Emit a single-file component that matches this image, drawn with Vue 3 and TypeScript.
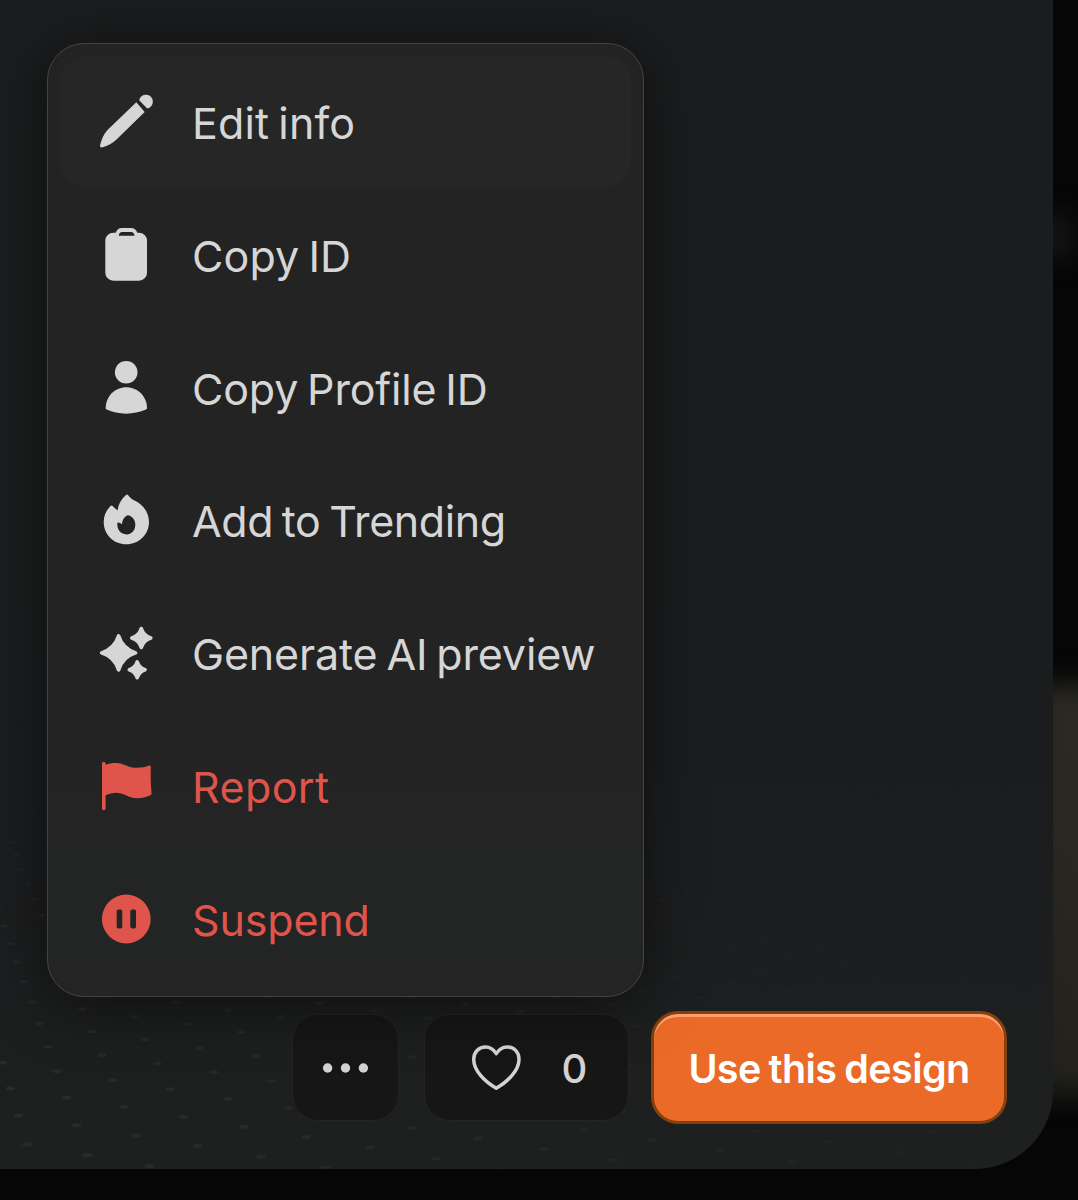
<script setup lang="ts">
interface MenuItem {
  label: string
  icon: string
  tracking: number
  danger?: boolean
  active?: boolean
}

const items: MenuItem[] = [
  { label: 'Edit info', icon: 'pencil', tracking: 0.12, active: true },
  { label: 'Copy ID', icon: 'clipboard', tracking: 0.1 },
  { label: 'Copy Profile ID', icon: 'person', tracking: -0.17 },
  { label: 'Add to Trending', icon: 'flame', tracking: -0.4 },
  { label: 'Generate AI preview', icon: 'sparkles', tracking: -0.15 },
  { label: 'Report', icon: 'flag', tracking: 0.4, danger: true },
  { label: 'Suspend', icon: 'pause', tracking: -0.15, danger: true },
]

// Four-pointed star around (cx, cy); the round stroke softens its tips.
function star(cx: number, cy: number, r: number): string {
  const a = r * 0.17
  const b = r * 0.46
  return (
    `M${cx} ${cy - r}C${cx + a} ${cy - b} ${cx + b} ${cy - a} ${cx + r} ${cy}` +
    `C${cx + b} ${cy + a} ${cx + a} ${cy + b} ${cx} ${cy + r}` +
    `C${cx - a} ${cy + b} ${cx - b} ${cy + a} ${cx - r} ${cy}` +
    `C${cx - b} ${cy - a} ${cx - a} ${cy - b} ${cx} ${cy - r}Z`
  )
}

interface Dot { x: number; y: number; s: number; o: number }

// Floor of dots seen in perspective.
const dots: Dot[] = []
for (let i = -26; i <= 9; i++) {
  for (let j = -3; j <= 30; j++) {
    const w = 1 - 0.0296 * i - 0.0115 * j
    if (w < 0.5) continue
    const x = (39.7 + 6.98 * i + 51.1 * j) / w
    const y = (1023.7 - 7.9 * i - 4.07 * j) / w
    if (x < -10 || x > 1050 || y < 720 || y > 1172) continue
    const o = Math.min(1, (y - 720) / 380) * Math.max(0.1, 1 - x / 1150)
    dots.push({ x, y, s: 0.88 / w, o })
  }
}
</script>

<template>
  <div class="stage">
    <div class="glow glow-small"></div>
    <div class="glow glow-large"></div>
    <main class="dialog">
      <svg class="floor" width="1053" height="1169" viewBox="0 0 1053 1169" aria-hidden="true">
        <ellipse
          v-for="(d, n) in dots"
          :key="n"
          :cx="d.x"
          :cy="d.y"
          :rx="4.8 * d.s"
          :ry="2.1 * d.s"
          :opacity="d.o"
          fill="#2a2c2b"
        />
      </svg>

      <footer class="actions">
        <button class="ghost more" aria-label="More">
          <svg width="56" height="20" viewBox="0 0 56 20" fill="#d3d3d3">
            <circle cx="9.6" cy="10" r="4.7" /><circle cx="27.5" cy="10" r="4.7" /><circle cx="45.4" cy="10" r="4.7" />
          </svg>
        </button>
        <button class="ghost like">
          <svg width="56" height="56" viewBox="0 0 56 56" fill="none" stroke="#d3d3d3" stroke-width="3.5" stroke-linejoin="round">
            <path d="M28.3 13.7C25.5 9.2 21.5 7 17.5 7C10.8 7 5.7 12 5.7 19.2C5.7 30.5 16.5 41.5 28.3 48.3C40 41.5 51 30.5 51 19.2C51 12 46 7 39.2 7C35 7 31 9.2 28.3 13.7Z" />
          </svg>
          <span class="count">0</span>
        </button>
        <button class="primary"><span>Use this design</span></button>
      </footer>

      <nav class="menu">
        <a
          v-for="item in items"
          :key="item.label"
          class="item"
          :class="{ danger: item.danger, active: item.active }"
        >
          <svg class="icon" width="56" height="56" viewBox="0 0 56 56" fill="currentColor">
            <template v-if="item.icon === 'pencil'">
              <path d="M41.2 7.2A6.9 6.9 0 1 1 49.2 15.4Z" />
              <path d="M38.3 9.3L46.7 18.9L18.5 46.5C14.5 50.5 9 53.5 3.8 54.4Q2 54.6 2 52.8C3 47.5 5.5 41.5 9.5 37Z" />
            </template>
            <path
              v-else-if="item.icon === 'clipboard'"
              fill-rule="evenodd"
              d="M15.3 6.7H17.7C18.8 3.8 20.8 2 23.8 2H33.2C36.2 2 38.2 3.8 39.3 6.7H41A8 8 0 0 1 49 14.7V46.7A8 8 0 0 1 41 54.7H15.3A8 8 0 0 1 7.3 46.7V14.7A8 8 0 0 1 15.3 6.7ZM20.8 9.7H36.6C36.2 7.4 35.2 5.9 33 5.9H24.2C22 5.9 21 7.4 20.8 9.7Z"
            />
            <template v-else-if="item.icon === 'person'">
              <circle cx="28.2" cy="13.2" r="11.3" />
              <path d="M7.7 49C7.7 37.5 16.8 28.2 28.3 28.2S49 37.5 49 49Q49 50 48 50.5C36 56 20 56 8.7 50.5Q7.7 50 7.7 49Z" />
            </template>
            <path
              v-else-if="item.icon === 'flame'"
              fill-rule="evenodd"
              d="M30 4C31.5 6 33.5 8.2 36.5 9.6C45 13.5 51 21.5 51 31C51 43.5 41 53.3 28.3 53.3C15.5 53.3 5.7 43.5 5.7 31C5.7 24.5 8.5 19 12.5 15Q13.7 14 14.8 15.2L19.6 19.6C20.2 13.5 23 8.5 28 4Q29.1 3.1 30 4ZM31 24.6C35 26 37.3 29.5 37.3 33.8C37.3 39.5 33.5 43.4 28.5 43.4C23 43.4 19 39 19.3 32.4Q19.5 31 20.8 31.6L24 33C24.3 29 26 26.5 28.5 24.8Q29.8 24 31 24.6Z"
            />
            <g v-else-if="item.icon === 'sparkles'" stroke="currentColor" stroke-width="3.6" stroke-linejoin="round">
              <path :d="star(20.6, 28.9, 17)" />
              <path :d="star(43.3, 14, 9.5)" />
              <path :d="star(39.2, 45.8, 7.9)" />
            </g>
            <path
              v-else-if="item.icon === 'flag'"
              d="M4 6.6A1.75 1.75 0 0 1 7.5 6.6V7.7C11 6.3 14.5 5.8 18 5.9C26 6.1 30.5 10.8 38.5 10.8C43.5 10.8 47.5 10.2 51 8.6Q52.8 8 52.8 10C52.6 18 52.6 27 53.6 36Q53.7 37.6 52.3 38.3C48 40.4 43.5 41.3 38.8 41.2C31 41 27 36.3 19.5 35.9C15.3 35.7 11.5 36.7 7.6 38.3V51.5A1.8 1.8 0 0 1 4 51.5Z"
            />
            <path
              v-else
              fill-rule="evenodd"
              d="M28.3 4.6A24.4 24.4 0 1 1 28.3 53.4A24.4 24.4 0 1 1 28.3 4.6ZM20.5 19.5A1.8 1.8 0 0 0 18.7 21.3V36.7A1.8 1.8 0 0 0 20.5 38.5H22.5A1.8 1.8 0 0 0 24.3 36.7V21.3A1.8 1.8 0 0 0 22.5 19.5ZM34.1 19.5A1.8 1.8 0 0 0 32.3 21.3V36.7A1.8 1.8 0 0 0 34.1 38.5H36.2A1.8 1.8 0 0 0 38 36.7V21.3A1.8 1.8 0 0 0 36.2 19.5Z"
            />
          </svg>
          <span class="label" :style="{ letterSpacing: item.tracking + 'px' }">{{ item.label }}</span>
        </a>
      </nav>
    </main>
  </div>
</template>

<style>
body {
  background: #050505;
}
</style>

<style scoped>
.stage {
  position: relative;
  width: 1078px;
  height: 1200px;
  overflow: hidden;
  background: #060606;
  font-family: Inter, 'Liberation Sans', sans-serif;
}
.glow {
  position: absolute;
  filter: blur(14px);
}
.glow-small {
  left: 1040px;
  top: 215px;
  width: 30px;
  height: 42px;
  border-radius: 50%;
  background: #1c1c1c;
}
.glow-large {
  left: 1030px;
  top: 685px;
  width: 90px;
  height: 410px;
  background: linear-gradient(#2b2a22, #272720 50%, #22221a);
}
.dialog {
  position: relative;
  box-sizing: border-box;
  width: 1053px;
  height: 1169px;
  padding: 0 46px 45px 0;
  border-radius: 0 0 78px 0;
  overflow: hidden;
  display: flex;
  flex-direction: column;
  justify-content: flex-end;
  background: linear-gradient(#1b1c1d, #1b1c1e 65%, #1e1f1f 100%);
}
.floor {
  position: absolute;
  left: 0;
  top: 0;
}
.actions {
  position: relative;
  display: flex;
  justify-content: flex-end;
  align-items: center;
}
button {
  box-sizing: border-box;
  margin: 0;
  padding: 0;
  display: flex;
  align-items: center;
  justify-content: center;
  font-family: inherit;
}
.ghost {
  height: 107px;
  border: 1px solid #232423;
  border-radius: 26px;
  background: #161616;
  color: #d3d3d3;
}
.more {
  width: 107px;
  margin-right: 25px;
}
.like {
  width: 205px;
  margin-right: 22px;
  padding-left: 2px;
  gap: 38px;
}
.count {
  font-size: 40px;
  font-weight: 500;
  line-height: 50px;
  padding-top: 3px;
}
.primary {
  width: 356px;
  height: 113px;
  border: 3px solid #84400f;
  border-radius: 27px;
  background: #eb6a27;
  box-shadow: inset 0 3px 0 #ff9f70;
  color: #fff;
  font-size: 39.5px;
  font-weight: 560;
  letter-spacing: -0.6px;
  word-spacing: -1.5px;
  white-space: nowrap;
}
.primary span {
  padding-top: 3px;
}
.menu {
  position: absolute;
  left: 47px;
  top: 43px;
  box-sizing: border-box;
  width: 597px;
  height: 954px;
  padding: 12px;
  border: 1px solid #434343;
  border-radius: 37px;
  display: flex;
  flex-direction: column;
  justify-content: space-between;
  background: linear-gradient(#232323 65%, #232424 85%, #242424);
  box-shadow: 0 8px 56px rgba(0, 0, 0, 0.5);
}
.item {
  height: 131px;
  display: flex;
  align-items: center;
  padding-left: 38px;
  gap: 38px;
  border-radius: 25px;
  color: #d6d6d6;
}
.item.active {
  background: #262626;
}
.item.danger {
  color: #df554b;
}
.icon {
  flex: none;
  margin-top: -1px;
}
.label {
  padding-top: 3px;
  font-size: 43px;
  line-height: 54px;
  word-spacing: -3px;
  white-space: nowrap;
}
</style>
